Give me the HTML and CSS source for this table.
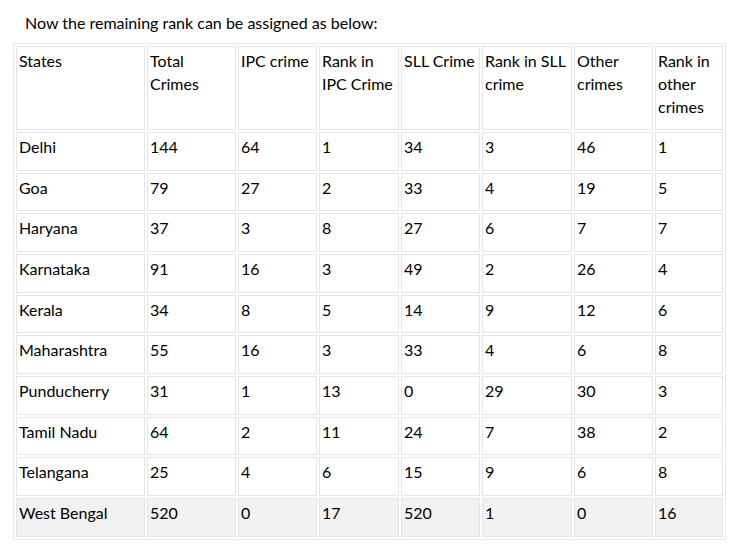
FILE: index.html
```html
<!DOCTYPE html>
<html>
<head>
<meta charset="utf-8">
<link rel="stylesheet" href="styles.css">
</head>
<body>
<p class="intro">Now the remaining rank can be assigned as below:</p>
<table class="ranks">
  <colgroup>
    <col class="c1"><col class="c2"><col class="c3"><col class="c4"><col class="c5"><col class="c6"><col class="c7"><col class="c8">
  </colgroup>
  <tr class="head">
    <td>States</td><td>Total Crimes</td><td>IPC crime</td><td>Rank in IPC Crime</td><td>SLL Crime</td><td>Rank in SLL crime</td><td>Other crimes</td><td>Rank in other crimes</td>
  </tr>
  <tr><td>Delhi</td><td>144</td><td>64</td><td>1</td><td>34</td><td>3</td><td>46</td><td>1</td></tr>
  <tr><td>Goa</td><td>79</td><td>27</td><td>2</td><td>33</td><td>4</td><td>19</td><td>5</td></tr>
  <tr><td>Haryana</td><td>37</td><td>3</td><td>8</td><td>27</td><td>6</td><td>7</td><td>7</td></tr>
  <tr><td>Karnataka</td><td>91</td><td>16</td><td>3</td><td>49</td><td>2</td><td>26</td><td>4</td></tr>
  <tr><td>Kerala</td><td>34</td><td>8</td><td>5</td><td>14</td><td>9</td><td>12</td><td>6</td></tr>
  <tr><td>Maharashtra</td><td>55</td><td>16</td><td>3</td><td>33</td><td>4</td><td>6</td><td>8</td></tr>
  <tr><td>Punducherry</td><td>31</td><td>1</td><td>13</td><td>0</td><td>29</td><td>30</td><td>3</td></tr>
  <tr><td>Tamil Nadu</td><td>64</td><td>2</td><td>11</td><td>24</td><td>7</td><td>38</td><td>2</td></tr>
  <tr><td>Telangana</td><td>25</td><td>4</td><td>6</td><td>15</td><td>9</td><td>6</td><td>8</td></tr>
  <tr class="shade"><td>West Bengal</td><td>520</td><td>0</td><td>17</td><td>520</td><td>1</td><td>0</td><td>16</td></tr>
</table>
</body>
</html>
```
FILE: styles.css
```css
html, body {
  margin: 0;
  padding: 0;
  background: #ffffff;
}
body {
  font-family: Lato, "Open Sans", sans-serif;
  font-size: 16px;
  color: #000;
}
.intro {
  margin: 11px 0 0 25px;
  line-height: 23px;
  height: 32px;
}
.ranks {
  margin-left: 13px;
  border-collapse: separate;
  border-spacing: 2px;
  border: 1px solid #e6e8eb;
  table-layout: fixed;
  width: 713px;
}
.ranks td {
  box-sizing: border-box;
  border: 1px solid #e3e5e8;
  padding: 2px 2px 11.67px 2px;
  line-height: 23px;
  vertical-align: top;
}
.head td {
  padding-bottom: 11px;
}
.c1 { width: 129px; }
.c2 { width: 89px; }
.c3 { width: 79px; }
.c4 { width: 80px; }
.c5 { width: 79px; }
.c6 { width: 90px; }
.c7 { width: 79px; }
.c8 { width: 68px; }
.shade td {
  background: #f2f2f2;
}
```
